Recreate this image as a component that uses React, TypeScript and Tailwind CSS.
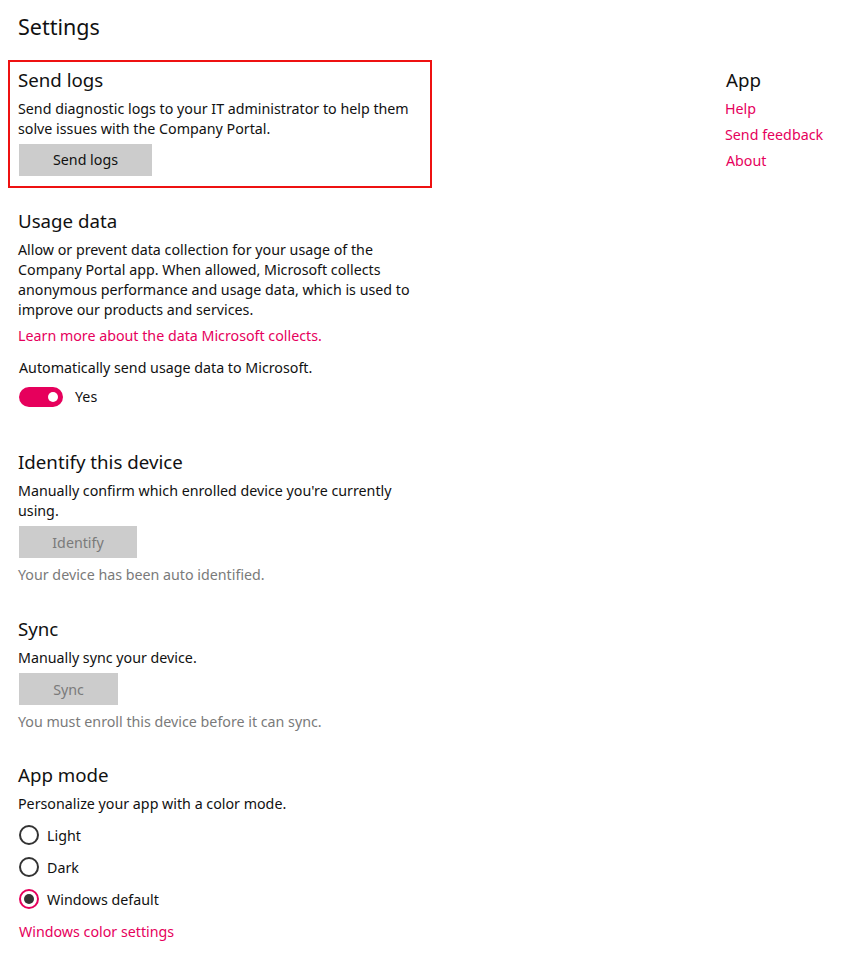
import React from "react";

const PINK = "text-[#e6005c]";

function Heading({ children }: { children: React.ReactNode }) {
  return <h2 className="text-[18.7px] leading-[28px] text-[#111]">{children}</h2>;
}

function Btn({ children, disabled, w }: { children: React.ReactNode; disabled?: boolean; w: string }) {
  return (
    <button
      className={`${w} h-[32px] bg-[#cccccc] text-[14.25px] ${disabled ? "text-[#7a7a7a]" : "text-[#111]"}`}
    >
      {children}
    </button>
  );
}

function Radio({ label, checked }: { label: string; checked?: boolean }) {
  return (
    <div className="flex items-center h-[32px] gap-[8px] pl-[1px]">
      {checked ? (
        <span className="w-[20px] h-[20px] rounded-full border-2 border-[#e6005c] flex items-center justify-center">
          <span className="w-[10px] h-[10px] rounded-full bg-[#333]" />
        </span>
      ) : (
        <span className="w-[20px] h-[20px] rounded-full border-2 border-[#333]" />
      )}
      <span className="text-[14.25px] text-[#111]">{label}</span>
    </div>
  );
}

export default function App() {
  return (
    <div
      className="w-[853px] h-[961px] bg-white relative overflow-hidden text-[14.25px]"
      style={{ fontFamily: '"Segoe UI", "Noto Sans", sans-serif' }}
    >
      <div className="flex">
        <div className="w-[432px] pl-[8px]">
          <h1 className="pl-[10px] pt-[11px] text-[21.5px] leading-[32px] text-[#111]">Settings</h1>

          <section className="mt-[17px] border-2 border-[#ee1111] pl-[8px] pt-[4px] pb-[10px]">
            <Heading>Send logs</Heading>
            <p className="mt-[5px] leading-[20px] text-[#111] w-[400px]">
              Send diagnostic logs to your IT administrator to help them solve issues with the Company Portal.
            </p>
            <div className="mt-[5px] pl-[1px]">
              <Btn w="w-[133px]">Send logs</Btn>
            </div>
          </section>

          <section className="pl-[10px] mt-[19px]">
            <Heading>Usage data</Heading>
            <p className="mt-[5px] leading-[20px] text-[#111] w-[400px]">
              Allow or prevent data collection for your usage of the Company Portal app. When allowed, Microsoft collects anonymous performance and usage data, which is used to improve our products and services.
            </p>
            <p className={`mt-[6px] leading-[20px] ${PINK}`}>Learn more about the data Microsoft collects.</p>
            <p className="mt-[12px] leading-[20px] text-[#111] pl-[1px]">Automatically send usage data to Microsoft.</p>
            <div className="mt-[8px] flex items-center gap-[12px] pl-[1px]">
              <span className="w-[44px] h-[20px] rounded-full bg-[#e6005c] flex items-center justify-end pr-[5px]">
                <span className="w-[10px] h-[10px] rounded-full bg-white" />
              </span>
              <span className="text-[#111]">Yes</span>
            </div>
          </section>

          <section className="pl-[10px] mt-[41px]">
            <Heading>Identify this device</Heading>
            <p className="mt-[5px] leading-[20px] text-[#111] w-[400px]">
              Manually confirm which enrolled device you're currently using.
            </p>
            <div className="mt-[5px] pl-[1px]">
              <Btn w="w-[118px]" disabled>Identify</Btn>
            </div>
            <p className="mt-[7px] leading-[20px] text-[#7a7a7a]">Your device has been auto identified.</p>
          </section>

          <section className="pl-[10px] mt-[30px]">
            <Heading>Sync</Heading>
            <p className="mt-[5px] leading-[20px] text-[#111]">Manually sync your device.</p>
            <div className="mt-[5px] pl-[1px]">
              <Btn w="w-[99px]" disabled>Sync</Btn>
            </div>
            <p className="mt-[7px] leading-[20px] text-[#7a7a7a]">You must enroll this device before it can sync.</p>
          </section>

          <section className="pl-[10px] mt-[29px]">
            <Heading>App mode</Heading>
            <p className="mt-[5px] leading-[20px] text-[#111]">Personalize your app with a color mode.</p>
            <div className="mt-[5px]">
              <Radio label="Light" />
              <Radio label="Dark" />
              <Radio label="Windows default" checked />
            </div>
            <p className={`mt-[7px] leading-[20px] pl-[1px] ${PINK}`}>Windows color settings</p>
          </section>
        </div>

        <aside className="ml-[293px] pt-[66px]">
          <h2 className="text-[18.7px] leading-[28px] text-[#111] pl-[1px]">App</h2>
          <div className={`flex flex-col leading-[26px] mt-[2px] ${PINK}`}>
            <span>Help</span>
            <span>Send feedback</span>
            <span className="pl-[1px]">About</span>
          </div>
        </aside>
      </div>
    </div>
  );
}
